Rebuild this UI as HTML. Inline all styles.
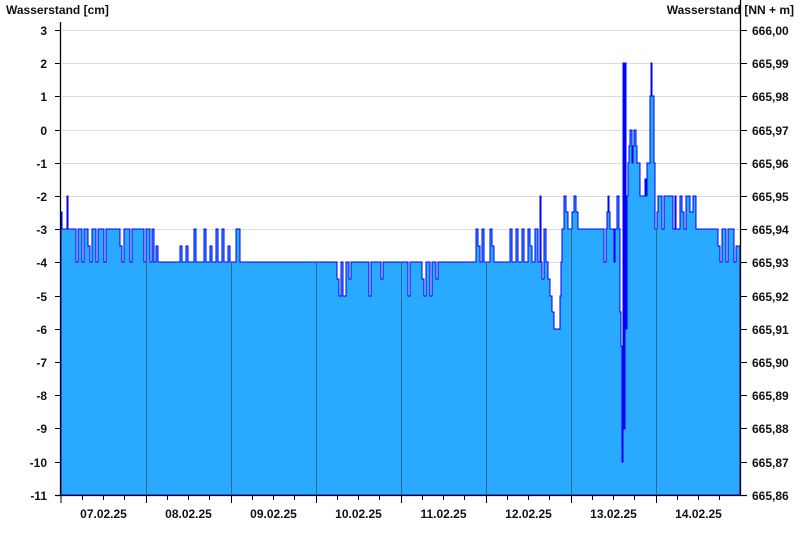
<!DOCTYPE html>
<html><head><meta charset="utf-8"><style>
html,body{margin:0;padding:0;background:#fff;}
svg{display:block;font-family:"Liberation Sans",Arial,sans-serif;font-weight:bold;font-size:12px;fill:#111;}
</style></head><body>
<svg width="800" height="550" viewBox="0 0 800 550" xmlns="http://www.w3.org/2000/svg">
<text x="6" y="14">Wasserstand [cm]</text>
<text x="794" y="14" text-anchor="end">Wasserstand [NN + m]</text>
<g stroke="#dcdcdc" stroke-width="1">
<line x1="61" x2="740" y1="30.5" y2="30.5"/><line x1="61" x2="740" y1="63.5" y2="63.5"/><line x1="61" x2="740" y1="96.5" y2="96.5"/><line x1="61" x2="740" y1="130.5" y2="130.5"/><line x1="61" x2="740" y1="163.5" y2="163.5"/><line x1="61" x2="740" y1="196.5" y2="196.5"/><line x1="61" x2="740" y1="229.5" y2="229.5"/><line x1="61" x2="740" y1="262.5" y2="262.5"/>
</g>
<path fill="#29a9ff" stroke="#0000ff" stroke-width="1" d="M61 495 V212 H62 V229 H67 V196 H68 V229 H76 V262 H78 V229 H82 V262 H84 V229 H88 V246 H90 V262 H92 V229 H96 V262 H98 V229 H104 V262 H106 V229 H120 V246 H122 V262 H124 V229 H130 V262 H132 V229 H144 V262 H146 V229 H150 V262 H152 V229 H154 V262 H156 V246 H158 V262 H180 V246 H182 V262 H186 V246 H188 V262 H194 V229 H196 V262 H204 V229 H206 V262 H210 V246 H212 V262 H216 V229 H218 V262 H222 V229 H224 V262 H228 V246 H230 V262 H236 V229 H240 V262 H337 V279 H339 V296 H341 V262 H343 V296 H346 V262 H349 V279 H351 V262 H369 V296 H371 V262 H381 V279 H383 V262 H408 V296 H410 V262 H422 V279 H424 V296 H426 V262 H430 V296 H432 V262 H436 V279 H438 V262 H476 V229 H478 V246 H480 V262 H482 V229 H484 V262 H490 V229 H492 V246 H494 V262 H510 V229 H512 V262 H516 V229 H518 V262 H522 V229 H524 V262 H528 V229 H530 V246 H532 V262 H535 V229 H538 V262 H540 V196 H541 V262 H542 V279 H544 V229 H546 V262 H548 V279 H550 V296 H552 V312 H554 V329 H560 V296 H561 V262 H562 V229 H564 V196 H566 V212 H568 V229 H572 V212 H574 V196 H576 V212 H578 V229 H604 V262 H606 V229 H607 V212 H608 V196 H609 V212 H610 V229 H614 V262 H615 V229 H617 V196 H619 V229 H620 V312 H621 V346 H622 V462 H623 V63 H624 V429 H625 V63 H626 V329 H627 V196 H628 V163 H629 V146 H630 V130 H632 V163 H633 V146 H634 V130 H636 V146 H637 V163 H640 V196 H645 V179 H646 V196 H647 V163 H650 V96 H651 V63 H652 V96 H654 V163 H655 V229 H657 V212 H658 V196 H662 V229 H664 V196 H673 V229 H675 V196 H676 V229 H680 V196 H682 V212 H684 V229 H686 V196 H690 V212 H693 V196 H696 V229 H718 V246 H720 V262 H722 V229 H726 V262 H728 V229 H734 V262 H736 V246 H740 V262 V495 Z"/>
<g stroke="#2a6a96" stroke-width="1">
<line x1="146.5" x2="146.5" y1="262" y2="495"/><line x1="231.5" x2="231.5" y1="262" y2="495"/><line x1="316.5" x2="316.5" y1="262" y2="495"/><line x1="401.5" x2="401.5" y1="262" y2="495"/><line x1="486.5" x2="486.5" y1="262" y2="495"/><line x1="571.5" x2="571.5" y1="229" y2="495"/><line x1="656.5" x2="656.5" y1="229" y2="495"/>
</g>
<g stroke="#000" stroke-width="1.3">
<line x1="60.5" x2="60.5" y1="22" y2="496"/>
<line x1="740.5" x2="740.5" y1="0" y2="496"/>
<line x1="55" x2="747" y1="495.5" y2="495.5"/>
</g>
<g stroke="#000" stroke-width="1">
<path d="M55 30.5H61M55 63.5H61M55 96.5H61M55 130.5H61M55 163.5H61M55 196.5H61M55 229.5H61M55 262.5H61M55 296.5H61M55 329.5H61M55 362.5H61M55 395.5H61M55 428.5H61M55 462.5H61"/>
<path d="M741 30.5H747M741 63.5H747M741 96.5H747M741 130.5H747M741 163.5H747M741 196.5H747M741 229.5H747M741 262.5H747M741 296.5H747M741 329.5H747M741 362.5H747M741 395.5H747M741 428.5H747M741 462.5H747"/>
<path d="M61 495V503M146.5 495V503M231.5 495V503M316.5 495V503M401.5 495V503M486.5 495V503M571.5 495V503M656.5 495V503M82.5 495V500M103.5 495V500M124.5 495V500M167.5 495V500M188.5 495V500M209.5 495V500M252.5 495V500M273.5 495V500M294.5 495V500M337.5 495V500M358.5 495V500M379.5 495V500M422.5 495V500M443.5 495V500M464.5 495V500M507.5 495V500M528.5 495V500M549.5 495V500M592.5 495V500M613.5 495V500M634.5 495V500M677.5 495V500M698.5 495V500M719.5 495V500"/>
</g>
<g text-anchor="end">
<text x="47" y="35">3</text><text x="47" y="68">2</text><text x="47" y="101">1</text><text x="47" y="135">0</text><text x="47" y="168">-1</text><text x="47" y="201">-2</text><text x="47" y="234">-3</text><text x="47" y="267">-4</text><text x="47" y="301">-5</text><text x="47" y="334">-6</text><text x="47" y="367">-7</text><text x="47" y="400">-8</text><text x="47" y="433">-9</text><text x="47" y="467">-10</text><text x="47" y="500">-11</text>
</g>
<g>
<text x="752" y="35">666,00</text><text x="752" y="68">665,99</text><text x="752" y="101">665,98</text><text x="752" y="135">665,97</text><text x="752" y="168">665,96</text><text x="752" y="201">665,95</text><text x="752" y="234">665,94</text><text x="752" y="267">665,93</text><text x="752" y="301">665,92</text><text x="752" y="334">665,91</text><text x="752" y="367">665,90</text><text x="752" y="400">665,89</text><text x="752" y="433">665,88</text><text x="752" y="467">665,87</text><text x="752" y="500">665,86</text>
</g>
<g text-anchor="middle">
<text x="103.5" y="518">07.02.25</text><text x="188.5" y="518">08.02.25</text><text x="273.5" y="518">09.02.25</text><text x="358.5" y="518">10.02.25</text><text x="443.5" y="518">11.02.25</text><text x="528.5" y="518">12.02.25</text><text x="613.5" y="518">13.02.25</text><text x="698.5" y="518">14.02.25</text>
</g>
</svg>
</body></html>
